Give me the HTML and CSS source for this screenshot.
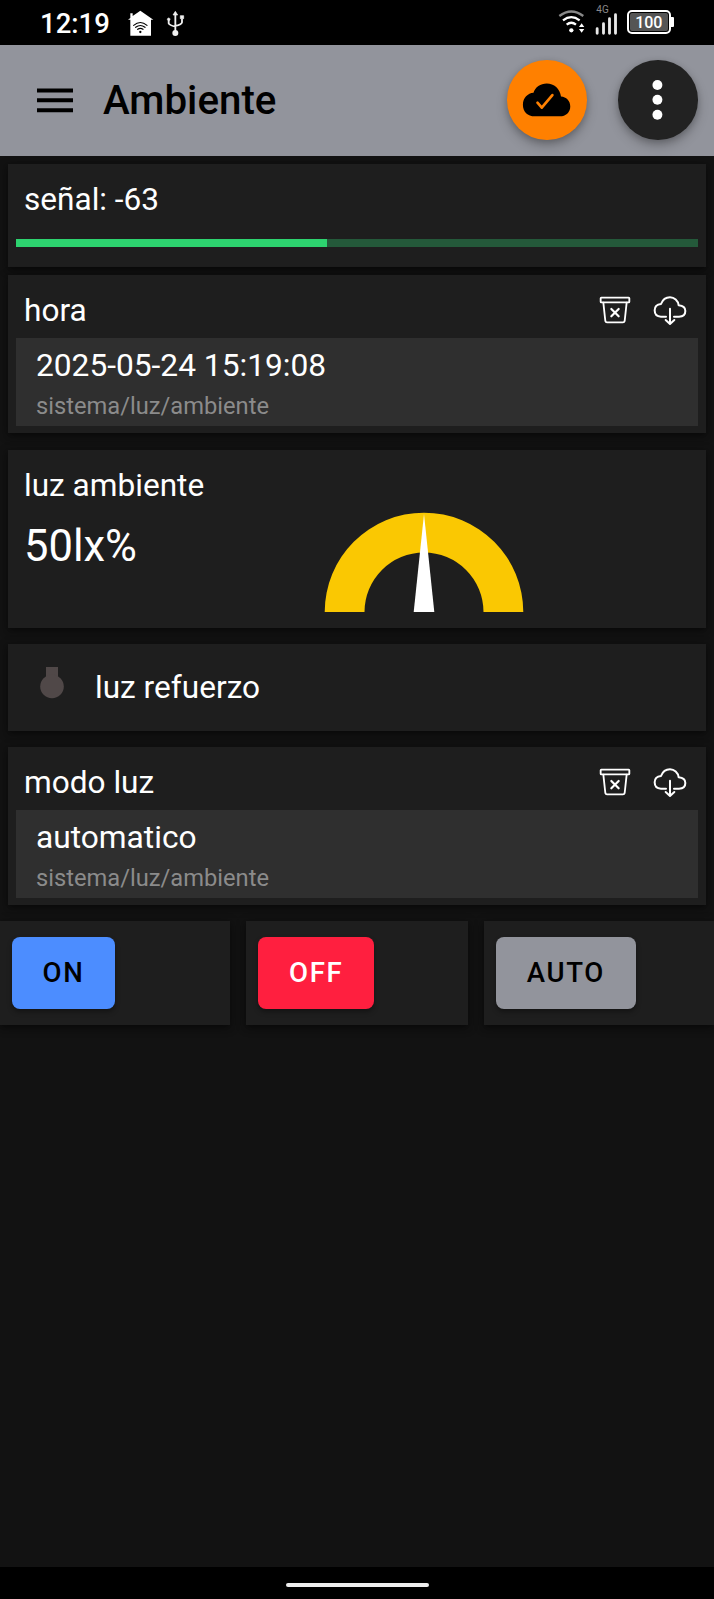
FILE: index.html
```html
<!DOCTYPE html>
<html lang="es">
<head>
<meta charset="utf-8">
<title>Ambiente</title>
<link rel="stylesheet" href="styles.css">
</head>
<body>
<svg width="0" height="0" class="defs">
  <symbol id="bin" viewBox="0 0 96 90" fill="none" stroke="currentColor" stroke-linejoin="round" stroke-linecap="round">
    <rect x="5" y="5" width="86" height="14" rx="2" stroke-width="5.5"/>
    <path d="M13 20 19 75Q20 79 24 79H72Q76 79 77 75L83 20" stroke-width="5.5"/>
    <path d="M37 39 59 61M59 39 37 61" stroke-width="6.5"/>
  </symbol>
  <symbol id="download" viewBox="0 0 102 90" fill="none" stroke="currentColor" stroke-linejoin="round" stroke-linecap="round" stroke-width="6">
    <path d="M39 62H24C12 62 5 55 5 43C5 32 13 25 24 24C29 11 38 4 51 4C64 4 75 14 77 28C89 29 97 35 97 45C97 56 89 62 78 62H63"/>
    <path d="M51 38V83M38 72 51 84 64 72"/>
  </symbol>
</svg>
<div class="status">
  <span class="clock">12:19</span>
  <svg class="home" viewBox="385 28 78 78"><path d="M385 57 392 52V38H399V46L422 30 461 57H454V105H392V57Z" fill="#fff"/><g fill="none" stroke="#000" stroke-width="3.5" stroke-linecap="round"><path d="M402 74Q422 57 442 74M408 80Q422 69 436 80M414 86Q422 80 430 86"/></g><circle cx="422" cy="94" r="3.5"/></svg>
  <svg class="usb" viewBox="498 28 57 79" fill="none" stroke="#f0f0f0" stroke-width="5.5"><path d="M526 98V40M506 57V68Q507 73 526 78M546 54V65Q545 71 526 76"/><path d="M526 32 533 43H519ZM541 45H551V54H541ZM506 52a4 4 0 1 0 .1 0" fill="#f0f0f0" stroke-width="2"/><circle cx="526" cy="97" r="9" fill="#f0f0f0" stroke="none"/></svg>
  <svg class="wifi" viewBox="234 28 82 76" fill="none" stroke="#fff" stroke-width="7"><path d="M238 49Q274 22 310 49" stroke="#888"/><path d="M249 62Q274 43 299 62M260 75Q274 64 288 75"/><circle cx="274" cy="92" r="6.5" fill="#fff" stroke="none"/><path d="M305 71 313 82H297ZM305 99 313 88H297Z" fill="#fff" stroke="none"/></svg>
  <div class="cell"><span class="gen">4G</span><svg viewBox="346 40 68 66" stroke="#e8e8e8" stroke-width="8.500" stroke-linecap="round"><path d="M352 87V101M371 72V101M389 57V101M407 45V101"/></svg></div>
  <div class="battery"><span class="level">100</span></div>
</div>
<header class="toolbar">
  <svg class="menu" viewBox="0 0 36 25"><path d="M0 2.5H36M0 12.3H36M0 22.3H36" stroke="#000" stroke-width="4"/></svg>
  <h1 class="title">Ambiente</h1>
  <div class="round cloud"><svg viewBox="83 180 240 240"><path d="M167 350C145 350 131 336 131 315C131 295 146 280 163 279C168 262 184 251 203 251C225 251 243 267 246 290C262 291 274 303 274 320C274 338 260 350 243 350Z"/><path d="M175 309 188 324 220 286" fill="none" stroke="#ff8000" stroke-width="8" stroke-linecap="round" stroke-linejoin="round"/></svg></div>
  <div class="round more"><svg viewBox="416 180 240 240" fill="#fff"><circle cx="535" cy="255.500" r="15"/><circle cx="535" cy="300" r="15"/><circle cx="535" cy="345" r="15"/></svg></div>
</header>
<main class="content">
  <section class="card signal">
    <div class="label">señal: -63</div>
    <div class="bar"><div class="fill" style="width:45.6%"></div></div>
  </section>
  <section class="card reading">
    <div class="head"><span class="label">hora</span><svg class="bin"><use href="#bin"/></svg><svg class="download"><use href="#download"/></svg></div>
    <div class="item"><div class="value">2025-05-24 15:19:08</div><div class="topic">sistema/luz/ambiente</div></div>
  </section>
  <section class="card light">
    <div class="label">luz ambiente</div>
    <div class="measure"><span class="lux">50lx%</span><svg class="gauge" viewBox="0 0 200 100"><path d="M.7 100A99.300 99.300 0 0 1 199.300 100H159.500A59.500 59.500 0 0 0 40.500 100Z" fill="#fac802"/><path d="M100 2 110.300 100H89.700Z" fill="#fff"/></svg></div>
  </section>
  <section class="card lamp">
    <svg class="bulb" viewBox="0 0 24 32" fill="#504848"><path d="M6 0H18V12H6Z"/><circle cx="12" cy="19.500" r="11.800"/></svg>
    <span class="label">luz refuerzo</span>
  </section>
  <section class="card reading">
    <div class="head"><span class="label">modo luz</span><svg class="bin"><use href="#bin"/></svg><svg class="download"><use href="#download"/></svg></div>
    <div class="item"><div class="value">automatico</div><div class="topic">sistema/luz/ambiente</div></div>
  </section>
  <div class="actions">
    <div class="cellbox"><button class="btn on">ON</button></div>
    <div class="cellbox"><button class="btn off">OFF</button></div>
    <div class="cellbox"><button class="btn auto">AUTO</button></div>
  </div>
</main>
<div class="navbar"><div class="pill"></div></div>
</body>
</html>
```
FILE: styles.css
```css
* { box-sizing: border-box; }
body {
  margin: 0;
  height: 1599px;
  display: flex;
  flex-direction: column;
  background: #121212;
  color: #fff;
  font-family: Roboto, "Liberation Sans", sans-serif;
  overflow: hidden;
}
svg { display: block; flex: none; }
.defs { position: absolute; }

.status { height: 44.500px; display: flex; align-items: flex-start; background: #000; padding-left: 40px; flex: none; }
.clock { width: 88px; margin-top: 7px; font-size: 27.500px; line-height: 33px; font-weight: 500; white-space: nowrap; }
.home { width: 26px; height: 26px; margin-top: 9.500px; }
.usb { width: 19px; height: 26.300px; margin: 9.500px 0 0 12px; }
.wifi { width: 27.300px; height: 25.300px; margin: 9px 0 0 373px; }
.cell { width: 23px; margin: 4px 0 0 10px; }
.cell svg { width: 23px; height: 22px; margin-top: -2px; }
.gen { display: block; height: 11px; margin-left: 1px; font-size: 10px; line-height: 11px; color: #888; }
.battery {
  position: relative; width: 44px; height: 24px; margin: 10px 0 0 8.500px; padding: 1px;
  border: 2px solid #fff; border-radius: 5px;
}
.battery::after { content: ""; position: absolute; right: -5px; top: 5px; width: 3px; height: 10px; border-radius: 0 1px 1px 0; background: #fff; }
.level { display: block; height: 18px; border-radius: 2px; background: #555; font-size: 16px; line-height: 19px; font-weight: 500; text-align: center; }

.toolbar { height: 111px; display: flex; align-items: center; background: #92949c; padding-left: 37.300px; flex: none; }
.menu { width: 36px; height: 25px; }
.title { margin: 0 0 0 29.700px; width: 404.500px; padding-top: 2px; font-size: 40.300px; line-height: 48px; font-weight: 500; color: #000; }
.round { width: 79.500px; height: 79.500px; border-radius: 50%; box-shadow: 0 6px 12px rgba(0,0,0,.22), 0 2px 6px rgba(0,0,0,.18); }
.round svg { width: 100%; height: 100%; }
.cloud { background: #ff8000; }
.more { background: #222; margin-left: 31.500px; }

.content { flex: 1; padding-top: 8px; }
.card, .cellbox { background: #1e1e1e; box-shadow: 0 3px 5px rgba(0,0,0,.3), 0 2px 10px rgba(0,0,0,.3); }
.card { margin: 0 8px; padding: 0 8px; }
.label { font-size: 31.600px; line-height: 36px; white-space: nowrap; }
.card > .label { padding-left: 8px; }
.signal { height: 103.500px; padding-top: 18px; }
.bar { height: 8px; margin-top: 21.500px; background: #24593a; }
.fill { height: 8px; background: #2dd36f; }
.reading { height: 158px; margin-top: 8px; }
.head { height: 63px; display: flex; align-items: center; padding: 9px 11px 0 8px; }
.head .label { flex: 1; }
.bin { width: 32px; height: 30px; margin-right: 22px; }
.download { width: 34px; height: 30px; }
.item { height: 87.500px; background: #2f2f2f; padding: 10px 0 0 20px; }
.value { font-size: 31.700px; line-height: 36px; }
.topic { margin-top: 7.500px; font-size: 23.700px; line-height: 28px; color: #8b8b8b; }
.light { height: 178.500px; margin-top: 16.500px; padding-top: 18px; }
.measure { display: flex; align-items: flex-start; padding-left: 8px; }
.lux { width: 299.700px; padding-top: 17.500px; font-size: 43.500px; line-height: 52px; }
.gauge { width: 200px; height: 100px; margin-top: 8.300px; }
.lamp { height: 87.500px; margin-top: 15.500px; display: flex; align-items: center; padding-left: 32px; }
.bulb { width: 24px; height: 32px; margin: -9px 31px 0 0; }
.card.lamp > .label { padding: 2px 0 0; }
.lamp + .reading { margin-top: 16px; }
.actions { display: grid; grid-template-columns: 230px 221.500px 230px; gap: 16.200px; margin-top: 16px; }
.cellbox { height: 103.500px; padding: 16px 12px; }
.btn {
  height: 71.500px; padding: 0 30px; border: 0; border-radius: 8px;
  font: 500 27.600px/36px Roboto, "Liberation Sans", sans-serif; letter-spacing: 1.650px;
  box-shadow: 0 3px 5px rgba(0,0,0,.35);
}
.on { width: 103px; background: #4c8dff; color: #000; }
.off { width: 116px; background: #ff1f3f; color: #fff; }
.auto { width: 140px; background: #92949c; color: #000; }
.navbar { height: 32.500px; display: flex; justify-content: center; align-items: center; padding-top: 4px; background: #000; flex: none; }
.pill { width: 143px; height: 4px; border-radius: 2px; background: #eee; }
```
